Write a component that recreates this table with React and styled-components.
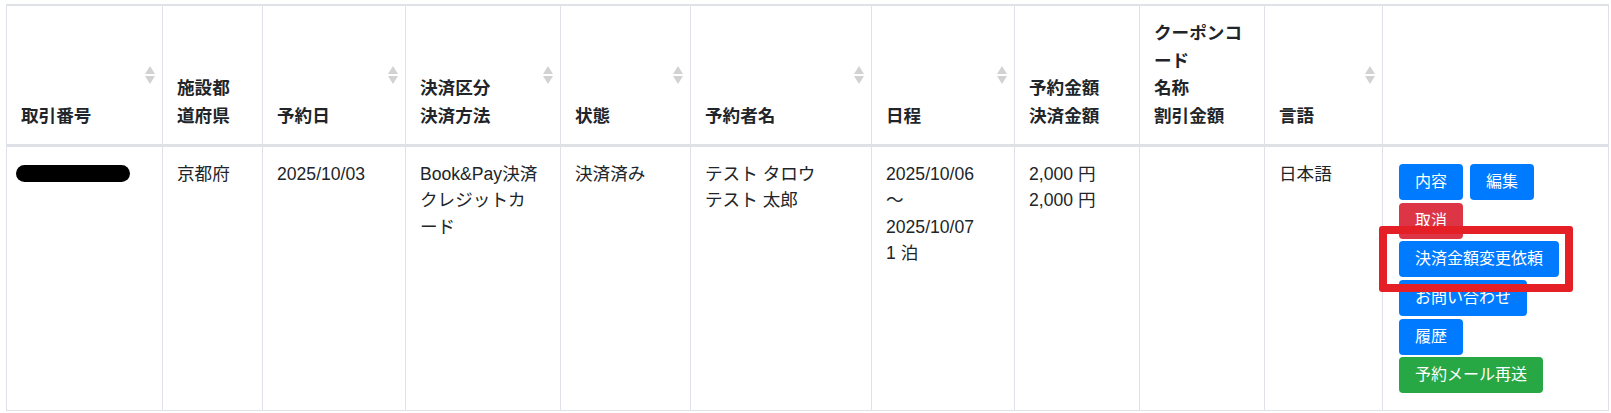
import styled, { createGlobalStyle } from "styled-components";

/* Global */

const GlobalStyle = createGlobalStyle`
    body {
        margin: 0;
        background: #fff;
    }
`

/* Styled components */

const Page = styled.div`
    padding: 4px 0 0 6px;
`

const Table = styled.table`
    width: 1603px;
    table-layout: fixed;
    border-collapse: separate;
    border-spacing: 0;
    border: 1px solid #dee2e6;
    border-right: 0;
    color: #212529;
    font-family: "Liberation Sans", "Noto Sans CJK JP", sans-serif;
`

const Th = styled.th`
    width: ${props => props.$w}px;
    box-sizing: border-box;
    position: relative;
    padding: 14px;
    text-align: left;
    vertical-align: bottom;
    font-size: 17.6px;
    line-height: 27.5px;
    font-weight: 700;
    border-top: 1px solid #dee2e6;
    border-right: 1px solid #dee2e6;
    border-bottom: 2px solid #dee2e6;
`

/* The grey up/down arrows DataTables puts on sortable columns */
const SortIcon = styled.svg`
    position: absolute;
    right: 7px;
    top: 50%;
    margin-top: -9px;
    width: 10px;
    height: 18px;
`

const Td = styled.td`
    padding: 14px;
    vertical-align: top;
    font-size: 17.6px;
    line-height: 26.4px;
    border-top: 1px solid #dee2e6;
    border-right: 1px solid #dee2e6;
`

const Redacted = styled.span`
    display: block;
    width: 114px;
    height: 17px;
    margin: 4px 0 0 -5px;
    background: #000;
    border-radius: 9px;
`

const Actions = styled.div`
    display: flex;
    flex-wrap: wrap;
    align-items: flex-start;
    gap: 2.7px 7px;
    padding: 3px 0 3px 2px;
`

const buttonColors = {
    primary: "#007bff",
    danger: "#dc3545",
    success: "#28a745",
}

const Button = styled.button`
    display: inline-flex;
    align-items: center;
    height: 36px;
    padding: 0 16px;
    border: 0;
    border-radius: 4px;
    background: ${props => buttonColors[props.$variant || "primary"]};
    color: #fff;
    font-family: "Liberation Sans", "Noto Sans CJK JP", sans-serif;
    font-size: 16px;
    line-height: 24px;
    font-weight: 400;
    white-space: nowrap;
    cursor: pointer;
    position: ${props => props.$highlight ? "relative" : "static"};

    /* red annotation box drawn around the button in the screenshot */
    &::after {
        content: ${props => props.$highlight ? "''" : "none"};
        position: absolute;
        top: -15px;
        left: -20px;
        right: -14px;
        bottom: -15px;
        border: 8px solid #e41f26;
        border-radius: 3px;
        z-index: 1;
        pointer-events: none;
    }
`

/* Data */

const columns = [
    { key: "id", w: 156, sortable: true, label: ["取引番号"] },
    { key: "pref", w: 100, sortable: false, label: ["施設都", "道府県"] },
    { key: "date", w: 143, sortable: true, label: ["予約日"] },
    { key: "pay", w: 155, sortable: true, label: ["決済区分", "決済方法"] },
    { key: "status", w: 130, sortable: true, label: ["状態"] },
    { key: "name", w: 181, sortable: true, label: ["予約者名"] },
    { key: "stay", w: 143, sortable: true, label: ["日程"] },
    { key: "amount", w: 125, sortable: false, label: ["予約金額", "決済金額"] },
    { key: "coupon", w: 125, sortable: false, label: ["クーポンコ", "ード", "名称", "割引金額"] },
    { key: "lang", w: 118, sortable: true, label: ["言語"] },
    { key: "actions", w: 226, sortable: false, label: [] },
]

const actions = [
    { label: "内容" },
    { label: "編集" },
    { label: "取消", variant: "danger" },
    { label: "決済金額変更依頼", highlight: true },
    { label: "お問い合わせ" },
    { label: "履歴" },
    { label: "予約メール再送", variant: "success" },
]

const Lines = ({ items }) => items.map((line, i) => (
    <span key={i}>{i > 0 && <br />}{line}</span>
))

const SortArrows = () => (
    <SortIcon viewBox="0 0 10 18">
        <path d="M5 0 L10 8 L0 8 Z" fill="#d2d2d2" />
        <path d="M0 10 L10 10 L5 18 Z" fill="#d2d2d2" />
    </SortIcon>
)

const App = () => {
    return (
        <>
            <GlobalStyle />
            <Page>
                <Table>
                    <thead>
                        <tr>
                            {columns.map(col => (
                                <Th key={col.key} $w={col.w}>
                                    <Lines items={col.label} />
                                    {col.sortable && <SortArrows />}
                                </Th>
                            ))}
                        </tr>
                    </thead>
                    <tbody>
                        <tr>
                            <Td><Redacted /></Td>
                            <Td>京都府</Td>
                            <Td>2025/10/03</Td>
                            <Td><Lines items={["Book&Pay決済", "クレジットカ", "ード"]} /></Td>
                            <Td>決済済み</Td>
                            <Td><Lines items={["テスト タロウ", "テスト 太郎"]} /></Td>
                            <Td><Lines items={["2025/10/06", "～", "2025/10/07", "1 泊"]} /></Td>
                            <Td><Lines items={["2,000 円", "2,000 円"]} /></Td>
                            <Td></Td>
                            <Td>日本語</Td>
                            <Td>
                                <Actions>
                                    {actions.map(a => (
                                        <Button key={a.label} $variant={a.variant} $highlight={a.highlight}>
                                            {a.label}
                                        </Button>
                                    ))}
                                </Actions>
                            </Td>
                        </tr>
                    </tbody>
                </Table>
            </Page>
        </>
    )
}

export default App;
